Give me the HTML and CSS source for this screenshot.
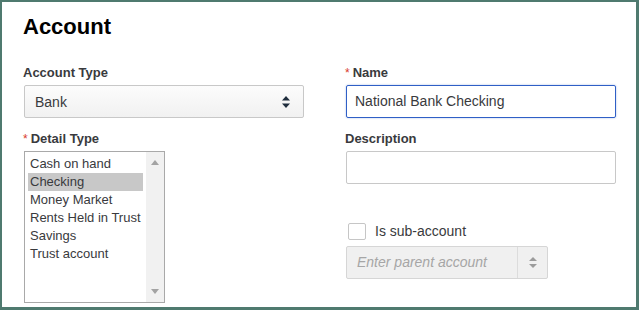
FILE: index.html
```html
<!DOCTYPE html>
<html lang="en">
<head>
  <meta charset="UTF-8" />
  <title>Account</title>
  <link rel="stylesheet" href="styles.css">
</head>
<body>
  <div class="frame">
    <h1>Account</h1>

    <div class="form-grid">
      <div class="col">
        <div class="field">
          <label>Account Type</label>
          <div class="select">
            <span>Bank</span>
            <svg class="updown" width="8" height="12" viewBox="0 0 8 12">
              <path d="M4 0 L8 4.5 L0 4.5 Z" fill="#1f2d3d"/>
              <path d="M0 7.5 L8 7.5 L4 12 Z" fill="#1f2d3d"/>
            </svg>
          </div>
        </div>

        <div class="field">
          <label><span class="req">*</span>Detail Type</label>
          <div class="listbox">
            <ul class="options">
              <li>Cash on hand</li>
              <li class="selected">Checking</li>
              <li>Money Market</li>
              <li>Rents Held in Trust</li>
              <li>Savings</li>
              <li>Trust account</li>
            </ul>
            <div class="scrollbar">
              <svg width="8" height="5" viewBox="0 0 8 5"><path d="M4 0 L8 5 L0 5 Z" fill="#a3a3a3"/></svg>
              <svg width="8" height="5" viewBox="0 0 8 5"><path d="M0 0 L8 0 L4 5 Z" fill="#a3a3a3"/></svg>
            </div>
          </div>
        </div>
      </div>

      <div class="col">
        <div class="field">
          <label><span class="req">*</span>Name</label>
          <div class="input focused">National Bank Checking</div>
        </div>

        <div class="field">
          <label>Description</label>
          <div class="input"></div>
        </div>

        <div class="check-row">
          <span class="checkbox"></span>
          <span>Is sub-account</span>
        </div>

        <div class="combo">
          <span class="placeholder">Enter parent account</span>
          <span class="combo-btn">
            <svg width="8" height="11" viewBox="0 0 8 11">
              <path d="M4 0 L8 4 L0 4 Z" fill="#9b9b9b"/>
              <path d="M0 7 L8 7 L4 11 Z" fill="#9b9b9b"/>
            </svg>
          </span>
        </div>
      </div>
    </div>
  </div>
</body>
</html>
```

FILE: styles.css
```css
* {
  box-sizing: border-box;
}

body {
  margin: 0;
  font-family: "Liberation Sans", Arial, sans-serif;
  color: #393a3d;
  background: #fff;
}

.frame {
  width: 639px;
  height: 310px;
  border: solid #4f7a6f;
  border-width: 2px 3px 3px 2px;
  padding: 14px 20px 0 22px;
  background: #fff;
}

h1 {
  margin: 0;
  font-size: 22px;
  line-height: 22px;
  font-weight: bold;
  color: #000;
  margin-left: -1px;
}

.form-grid {
  display: grid;
  grid-template-columns: 280px 270px;
  column-gap: 42px;
  margin-top: 27px;
}

.col {
  display: flex;
  flex-direction: column;
}

.field + .field {
  margin-top: 13px;
}

label {
  display: block;
  font-size: 13px;
  line-height: 16px;
  font-weight: bold;
  margin-bottom: 4px;
  margin-left: -1px;
}

.req {
  color: #d93a2b;
  font-weight: normal;
  font-size: 12px;
  margin-right: 3px;
}

.select {
  height: 33px;
  border: 1px solid #c8c8c8;
  border-radius: 2px;
  background: linear-gradient(#fcfcfc, #f1f1f1);
  display: flex;
  align-items: center;
  justify-content: space-between;
  padding: 0 13px 0 10px;
  font-size: 14px;
}

.listbox {
  width: 141px;
  height: 152px;
  border: 1px solid #a9a9a9;
  display: flex;
}

.options {
  list-style: none;
  margin: 0;
  padding: 3px;
  flex: 1;
}

.options li {
  height: 18px;
  line-height: 18px;
  font-size: 13px;
  padding-left: 2px;
  white-space: nowrap;
}

.options li.selected {
  background: #c8c8c8;
}

.scrollbar {
  width: 18px;
  background: #f1f1f1;
  display: flex;
  flex-direction: column;
  align-items: center;
  justify-content: space-between;
  padding: 8px 0;
}

.input {
  height: 33px;
  border: 1px solid #c8c8c8;
  border-radius: 2px;
  padding: 0 8px;
  font-size: 14px;
  line-height: 31px;
}

.input.focused {
  border-color: #2f5fc6;
  box-shadow: 0 0 2px rgba(47, 95, 198, 0.45);
}

.check-row {
  display: flex;
  align-items: center;
  margin-top: 38px;
  height: 18px;
  font-size: 14px;
}

.checkbox {
  width: 18px;
  height: 17px;
  border: 1px solid #c6c6c6;
  border-radius: 2px;
  margin-left: 2px;
  margin-right: 9px;
  background: #fff;
}

.combo {
  width: 202px;
  height: 33px;
  margin-top: 6px;
  border: 1px solid #d6d6d6;
  border-radius: 2px;
  background: #f0f0f0;
  display: flex;
  align-items: stretch;
}

.placeholder {
  flex: 1;
  padding-left: 10px;
  font-size: 14px;
  font-style: italic;
  color: #a6a6a6;
  line-height: 31px;
}

.combo-btn {
  width: 30px;
  border-left: 1px solid #dcdcdc;
  display: flex;
  align-items: center;
  justify-content: center;
}
```
